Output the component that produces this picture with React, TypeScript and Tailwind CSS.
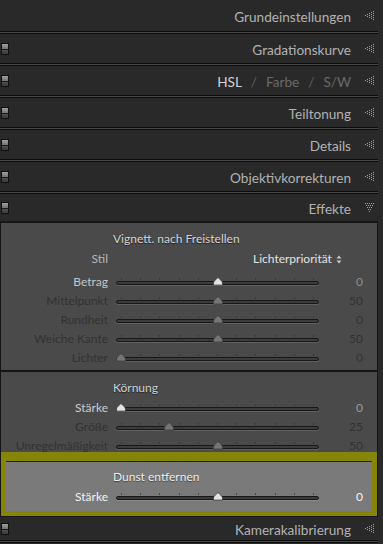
import React from "react"

type Dir = "left" | "down"

// dotted disclosure triangle used on the panel headers
function Disclosure({ dir = "left" }: { dir?: Dir }) {
  const dots: [number, number][] = []
  for (let c = 0; c < 5; c++) {
    for (let k = 0; k <= c; k++) {
      const a = c * 2
      const b = 4 - c + k * 2
      dots.push(dir === "left" ? [a, b] : [b, 8 - a])
    }
  }
  return (
    <svg width="10" height="10" viewBox="0 0 10 10" className="shrink-0">
      {dots.map(([x, y], i) => (
        <rect key={i} x={x} y={y} width="1" height="1" fill="#a4a4a4" />
      ))}
    </svg>
  )
}

function Toggle() {
  return (
    <div className="flex h-[12px] w-[8px] shrink-0 flex-col border border-[#101010]">
      <div className="h-[5px] bg-gradient-to-b from-[#a0a0a0] to-[#707070]" />
      <div className="h-px bg-[#1a1a1a]" />
      <div className="flex-1 bg-gradient-to-b from-[#505050] to-[#3a3a3a]" />
    </div>
  )
}

function Separator() {
  return <div className="h-[3px] w-[378px] border-y border-[#0c0c0c] bg-[#474747]" />
}

function Header({
  children,
  toggle = true,
  dir = "left",
  className,
}: {
  children: React.ReactNode
  toggle?: boolean
  dir?: Dir
  className: string
}) {
  return (
    <div className={`flex w-[378px] items-center pl-[1px] pr-[3px] ${className}`}>
      {toggle && <Toggle />}
      <div className="flex-1" />
      <div className="pt-[4px] text-[13.6px] text-[#b2b2b2]">{children}</div>
      <div className="ml-[14px] pt-[1px]">
        <Disclosure dir={dir} />
      </div>
    </div>
  )
}

function Knob({ light }: { light: boolean }) {
  return (
    <svg width="10" height="9" viewBox="0 0 10 9">
      <path
        d="M5 0.5 C6 1.5 9.5 4 9.5 6 L9.5 8.5 L0.5 8.5 L0.5 6 C0.5 4 4 1.5 5 0.5 Z"
        fill={light ? "#e4e4e4" : "#757575"}
        stroke={light ? "#3a3a3a" : "#3c3c3c"}
        strokeWidth="0.8"
      />
      <path d="M1 7.2 L9 7.2 L9 8.2 L1 8.2 Z" fill={light ? "#9a9a9a" : "#5a5a5a"} />
    </svg>
  )
}

type SliderProps = {
  label: string
  value: string
  pos: number
  on?: boolean
  labelColor: string
  valueColor: string
  tickColor?: string
}

function SliderRow({ label, value, pos, on = false, labelColor, valueColor, tickColor = "bg-[#363636]" }: SliderProps) {
  return (
    <div className="flex h-[19px] items-center">
      <div className={`w-[107px] text-right text-[12px] ${labelColor}`}>{label}</div>
      <div className="relative ml-[8px] h-[12px] w-[203px]">
        <div className="absolute left-[5px] right-[5px] top-[2px] flex h-[2px] justify-between">
          {Array.from({ length: 11 }).map((_, i) => (
            <div key={i} className={`h-[2px] w-px ${tickColor}`} />
          ))}
        </div>
        <div className="absolute left-0 right-0 top-[5px] h-[4px] rounded-full border border-[#171717] bg-[#3c3c3c] shadow-[0_1px_0_rgba(255,255,255,0.12)]" />
        <div className="absolute top-[1px]" style={{ left: 5 + pos * 193 - 5 }}>
          <Knob light={on} />
        </div>
      </div>
      <div className={`w-[44px] text-right text-[12px] ${valueColor}`}>{value}</div>
    </div>
  )
}

export default function App() {
  const dim = "text-[#323232]"
  return (
    <div className="h-[544px] w-[383px] overflow-hidden bg-[#292929] font-['Lato','Liberation_Sans',sans-serif]">
      <Header toggle={false} className="h-[31px]">
        Grundeinstellungen
      </Header>
      <Separator />
      <Header className="h-[29px]">Gradationskurve</Header>
      <Separator />
      <Header className="h-[29px]">
        <span className="flex gap-[9px]">
          <span className="text-[#d2d2d2]">HSL</span>
          <span className="text-[#5e5e5e]">/</span>
          <span className="text-[#6a6a6a]">Farbe</span>
          <span className="text-[#5e5e5e]">/</span>
          <span className="text-[#6a6a6a]">S/W</span>
        </span>
      </Header>
      <Separator />
      <Header className="h-[29px]">Teiltonung</Header>
      <Separator />
      <Header className="h-[29px]">Details</Header>
      <Separator />
      <Header className="h-[29px]">Objektivkorrekturen</Header>
      <Separator />
      <Header dir="down" className="h-[27px]">
        Effekte
      </Header>

      {/* Effekte panel */}
      <div className="w-[378px] border-x border-b border-t-2 border-[#151515] bg-[#4a4a4a]">
        <div className="pb-[3px] pt-[6px]">
          <div className="flex h-[20px] items-center pl-[112px] text-[12px] text-[#d6d6d6] [text-shadow:0_1px_1px_rgba(0,0,0,0.55)]">
            Vignett. nach Freistellen
          </div>
          <div className="flex h-[20px] items-center text-[12px]">
            <div className="w-[107px] text-right text-[#b6b6b6]">Stil</div>
            <div className="ml-[145px] flex items-center gap-[4px] text-[#e2e2e2]">
              Lichterpriorität
              <svg width="6" height="9" viewBox="0 0 6 9">
                <path d="M3 0.5 L5.5 3.5 L0.5 3.5 Z M3 8.5 L5.5 5.5 L0.5 5.5 Z" fill="#c8c8c8" />
              </svg>
            </div>
          </div>
          <div className="mt-[3px]">
            <SliderRow label="Betrag" value="0" pos={0.5} on labelColor="text-[#c6c6c6]" valueColor="text-[#8e8e8e]" />
            <SliderRow label="Mittelpunkt" value="50" pos={0.5} labelColor={dim} valueColor={dim} />
            <SliderRow label="Rundheit" value="0" pos={0.5} labelColor={dim} valueColor={dim} />
            <SliderRow label="Weiche Kante" value="50" pos={0.5} labelColor={dim} valueColor={dim} />
            <SliderRow label="Lichter" value="0" pos={0} labelColor={dim} valueColor={dim} />
          </div>
        </div>
        <div className="h-[2px] bg-[#151515]" />
        <div className="h-[80px] pt-[6px]">
          <div className="flex h-[20px] items-center pl-[112px] text-[12px] text-[#d2d2d2] [text-shadow:0_1px_1px_rgba(0,0,0,0.55)]">
            Körnung
          </div>
          <SliderRow label="Stärke" value="0" pos={0} on labelColor="text-[#cccccc]" valueColor="text-[#9a9a9a]" />
          <SliderRow label="Größe" value="25" pos={0.25} labelColor={dim} valueColor={dim} />
          <SliderRow label="Unregelmäßigkeit" value="50" pos={0.5} labelColor={dim} valueColor={dim} />
        </div>

        {/* highlighted Dunst entfernen block */}
        <div className="bg-[#85850a] px-[5px] pb-[5px] pt-[9px]">
          <div className="border-t border-[#222] bg-[#7a7a7a] pb-[5px] pt-[5px]">
            <div className="flex h-[20px] items-center pl-[107px] text-[12px] text-[#eeeeee] [text-shadow:0_1px_1px_rgba(0,0,0,0.45)]">
              Dunst entfernen
            </div>
            <div className="-ml-[5px]">
              <SliderRow
                label="Stärke"
                value="0"
                pos={0.5}
                on
                labelColor="text-[#f2f2f2]"
                valueColor="text-[#f6f6f6]"
                tickColor="bg-[#4a4a4a]"
              />
            </div>
          </div>
        </div>
      </div>

      <Header className="h-[23px]">Kamerakalibrierung</Header>
      <Separator />
    </div>
  )
}
